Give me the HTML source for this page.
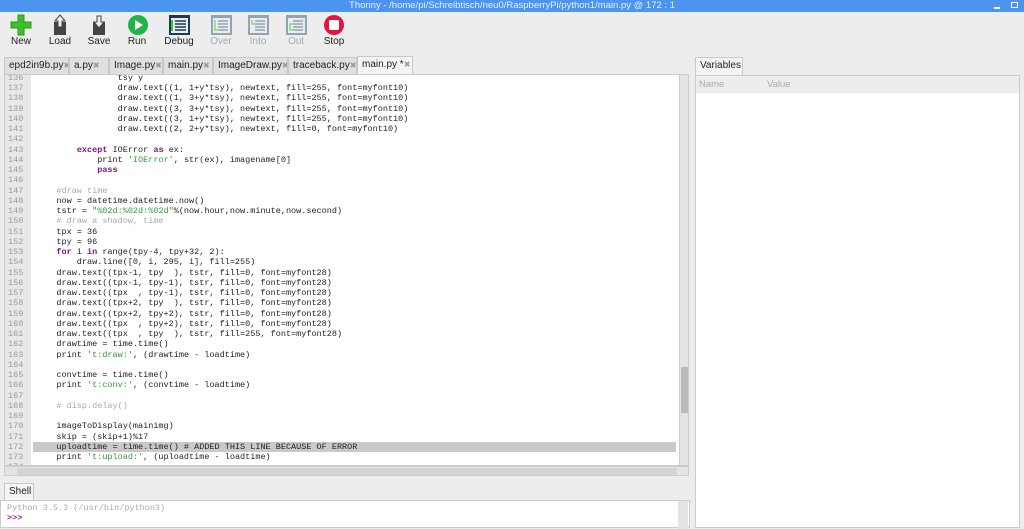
<!DOCTYPE html>
<html><head><meta charset="utf-8"><style>
*{margin:0;padding:0;box-sizing:border-box}
body{width:1024px;height:528px;overflow:hidden;background:#ededed;font-family:"Liberation Sans",sans-serif;position:relative}
.title{position:absolute;left:0;top:0;width:1024px;height:12px;background:#4b94ef;color:#e8f0ff;font-size:9.5px;line-height:11px;text-align:center}
.tb{position:absolute;top:36px;font-size:10px;color:#222;text-align:center;width:40px}
.tb.dis{color:#aaa}
.ic{position:absolute}
.tabs{position:absolute;top:57px;left:4px;height:17px}
.tab{position:absolute;top:0;height:17px;border:1px solid #c8c8c8;border-bottom:none;background:#e0e0e0;font-size:10px;line-height:16px;padding-left:4px;color:#222;white-space:nowrap;overflow:hidden}
.tab i{font-style:normal;color:#999;font-size:8px}
.ed{position:absolute;left:4px;top:74px;width:685px;height:392px;background:#fff;border:1px solid #ccc;overflow:hidden}
.gut{position:absolute;left:0;top:0;width:26px;height:100%;background:#e8e8e8}
.ln{position:absolute;font-family:"Liberation Mono",monospace;font-size:8.5px;white-space:pre;line-height:10px;height:10px}
.num{left:3px;color:#9a9a9a}
.code{left:31px;color:#222}
.k{color:#7f0f7a;font-weight:bold}
.s{color:#2f9a3a}
.c{color:#aaa}
.hl{position:absolute;left:28px;width:643px;height:10px;background:#c9c9c9}
.vs{position:absolute;left:674px;top:0;width:10px;height:392px;background:#e4e4e4;border-left:1px solid #ccc}
.hs{position:absolute;left:4px;top:466px;width:685px;height:10px;background:#e4e4e4;border:1px solid #ccc}
</style></head><body>
<div class="title">Thonny  -  /home/pi/Schreibtisch/neu0/RaspberryPi/python1/main.py  @  172 : 1</div>
<div style="position:absolute;right:24px;top:7px;width:6px;height:2px;background:#fff"></div>
<div style="position:absolute;right:6px;top:2px;width:7px;height:6px;border:1px solid #fff"></div>

<svg class="ic" style="left:10px;top:14px" width="22" height="22"><path d="M8 1h6v7h7v6h-7v7H8v-7H1V8h7z" fill="#3cbf2a" stroke="#2a9a1c"/></svg>
<svg class="ic" style="left:51px;top:14px" width="18" height="22"><rect x="3" y="8" width="12" height="13" fill="#444"/><path d="M9 1l5 6h-3v6H7V7H4z" fill="#eee" stroke="#444"/></svg>
<svg class="ic" style="left:90px;top:14px" width="18" height="22"><rect x="3" y="8" width="12" height="13" fill="#444"/><path d="M9 14l5-6h-3V2H7v6H4z" fill="#eee" stroke="#444"/></svg>
<svg class="ic" style="left:127px;top:14px" width="22" height="22"><circle cx="11" cy="11" r="10" fill="#1fb44a"/><path d="M8 6l8 5-8 5z" fill="#fff"/></svg>
<svg class="ic" style="left:169px;top:15px" width="21" height="20"><rect width="21" height="20" fill="#1e3a50"/><rect x="2" y="3" width="17" height="15" fill="#e8eef2"/><path d="M6 6h11M6 9h11M6 12h11M6 15h11" stroke="#1e3a50" stroke-width="1.5"/><path d="M3 5v11" stroke="#3c3" stroke-width="2"/></svg>
<svg class="ic" style="left:211px;top:15px" width="21" height="20" opacity=".55"><rect width="21" height="20" fill="#4a6a80"/><rect x="2" y="3" width="17" height="15" fill="#e8eef2"/><path d="M7 6h10M7 9h10M7 12h10M7 15h10" stroke="#4a6a80" stroke-width="1.5"/><path d="M4 5v10h3" stroke="#3c3" stroke-width="1.5" fill="none"/></svg>
<svg class="ic" style="left:248px;top:15px" width="21" height="20" opacity=".55"><rect width="21" height="20" fill="#4a6a80"/><rect x="2" y="3" width="17" height="15" fill="#e8eef2"/><path d="M7 6h10M7 9h10M7 12h10M7 15h10" stroke="#4a6a80" stroke-width="1.5"/><path d="M4 5v4h3" stroke="#3c3" stroke-width="1.5" fill="none"/></svg>
<svg class="ic" style="left:286px;top:15px" width="21" height="20" opacity=".55"><rect width="21" height="20" fill="#4a6a80"/><rect x="2" y="3" width="17" height="15" fill="#e8eef2"/><path d="M7 6h10M7 9h10M7 12h10M7 15h10" stroke="#4a6a80" stroke-width="1.5"/><path d="M7 9H4v6h3" stroke="#3c3" stroke-width="1.5" fill="none"/></svg>
<svg class="ic" style="left:323px;top:14px" width="22" height="22"><circle cx="11" cy="11" r="10" fill="#e0163f"/><rect x="6" y="6" width="10" height="10" rx="1.5" fill="#fff"/></svg>
<div class="tb" style="left:1px">New</div>
<div class="tb" style="left:40px">Load</div>
<div class="tb" style="left:79px">Save</div>
<div class="tb" style="left:117px">Run</div>
<div class="tb" style="left:159px">Debug</div>
<div class="tb dis" style="left:201px">Over</div>
<div class="tb dis" style="left:238px">Into</div>
<div class="tb dis" style="left:276px">Out</div>
<div class="tb" style="left:314px">Stop</div>

<div class="tabs">
<div class="tab" style="left:0;width:65px">epd2in9b.py<i>✖</i></div>
<div class="tab" style="left:65px;width:40px">a.py<i>✖</i></div>
<div class="tab" style="left:105px;width:54px">Image.py<i>✖</i></div>
<div class="tab" style="left:159px;width:50px">main.py<i>✖</i></div>
<div class="tab" style="left:209px;width:75px">ImageDraw.py<i>✖</i></div>
<div class="tab" style="left:284px;width:69px">traceback.py<i>✖</i></div>
<div class="tab" style="left:353px;width:56px;background:#f4f4f4;top:-1px;height:18px">main.py *<i>✖</i></div>
</div>

<div class="ed">
<div class="gut"></div>
<div class="hl" style="top:367px"></div>
<div id="lines"></div>
<div class="vs"><div style="position:absolute;left:1px;top:292px;width:7px;height:46px;background:#bbb"></div></div>
</div>
<div class="hs"><div style="position:absolute;left:12px;top:1px;width:660px;height:7px;background:#d4d4d4"></div></div>

<div class="tab" style="left:4px;top:483px;width:30px;background:#f4f4f4;height:18px;padding-left:4px">Shell</div>
<div style="position:absolute;left:0;top:500px;width:690px;height:28px;background:#fff;border:1px solid #ccc">
<div class="ln" style="left:6px;top:2px;color:#aaa">Python 3.5.3 (/usr/bin/python3)</div>
<div class="ln" style="left:6px;top:12px;color:#a020a0;font-weight:bold">&gt;&gt;&gt;</div>
<div style="position:absolute;left:677px;top:0;width:10px;height:28px;background:#e4e4e4"></div>
</div>

<div class="tab" style="left:695px;top:57px;width:48px;background:#f4f4f4;height:18px;padding-left:4px">Variables</div>
<div style="position:absolute;left:695px;top:75px;width:325px;height:453px;background:#fff;border:1px solid #ccc">
<div style="height:17px;background:#ededed;font-size:9.5px;color:#aaa;line-height:17px;position:relative"><span style="position:absolute;left:3px">Name</span><span style="position:absolute;left:71px">Value</span></div>
</div>

<script>
var L={136:'                tsy y',
137:'                draw.text((1, 1+y*tsy), newtext, fill=255, font=myfont10)',
138:'                draw.text((1, 3+y*tsy), newtext, fill=255, font=myfont10)',
139:'                draw.text((3, 3+y*tsy), newtext, fill=255, font=myfont10)',
140:'                draw.text((3, 1+y*tsy), newtext, fill=255, font=myfont10)',
141:'                draw.text((2, 2+y*tsy), newtext, fill=0, font=myfont10)',
142:'',
143:'        <b class=k>except</b> IOError <b class=k>as</b> ex:',
144:'            print <span class=s>\'IOError\'</span>, str(ex), imagename[0]',
145:'            <b class=k>pass</b>',
146:'',
147:'    <span class=c>#draw time</span>',
148:'    now = datetime.datetime.now()',
149:'    tstr = <span class=s>"%02d:%02d:%02d"</span>%(now.hour,now.minute,now.second)',
150:'    <span class=c># draw a shadow, time</span>',
151:'    tpx = 36',
152:'    tpy = 96',
153:'    <b class=k>for</b> i <b class=k>in</b> range(tpy-4, tpy+32, 2):',
154:'        draw.line([0, i, 295, i], fill=255)',
155:'    draw.text((tpx-1, tpy  ), tstr, fill=0, font=myfont28)',
156:'    draw.text((tpx-1, tpy-1), tstr, fill=0, font=myfont28)',
157:'    draw.text((tpx  , tpy-1), tstr, fill=0, font=myfont28)',
158:'    draw.text((tpx+2, tpy  ), tstr, fill=0, font=myfont28)',
159:'    draw.text((tpx+2, tpy+2), tstr, fill=0, font=myfont28)',
160:'    draw.text((tpx  , tpy+2), tstr, fill=0, font=myfont28)',
161:'    draw.text((tpx  , tpy  ), tstr, fill=255, font=myfont28)',
162:'    drawtime = time.time()',
163:'    print <span class=s>\'t:draw:\'</span>, (drawtime - loadtime)',
164:'',
165:'    convtime = time.time()',
166:'    print <span class=s>\'t:conv:\'</span>, (convtime - loadtime)',
167:'',
168:'    <span class=c># disp.delay()</span>',
169:'',
170:'    imageToDisplay(mainimg)',
171:'    skip = (skip+1)%17',
172:'    uploadtime = time.time() # ADDED THIS LINE BECAUSE OF ERROR',
173:'    print <span class=s>\'t:upload:\'</span>, (uploadtime - loadtime)',
174:''};
var h='';
for(var n=136;n<=174;n++){var t=8+(n-137)*10.25;
h+='<div class="ln num" style="top:'+t+'px">'+n+'</div><div class="ln code" style="top:'+t+'px">'+L[n]+'</div>';}
document.getElementById('lines').innerHTML=h;
</script>
</body></html>
